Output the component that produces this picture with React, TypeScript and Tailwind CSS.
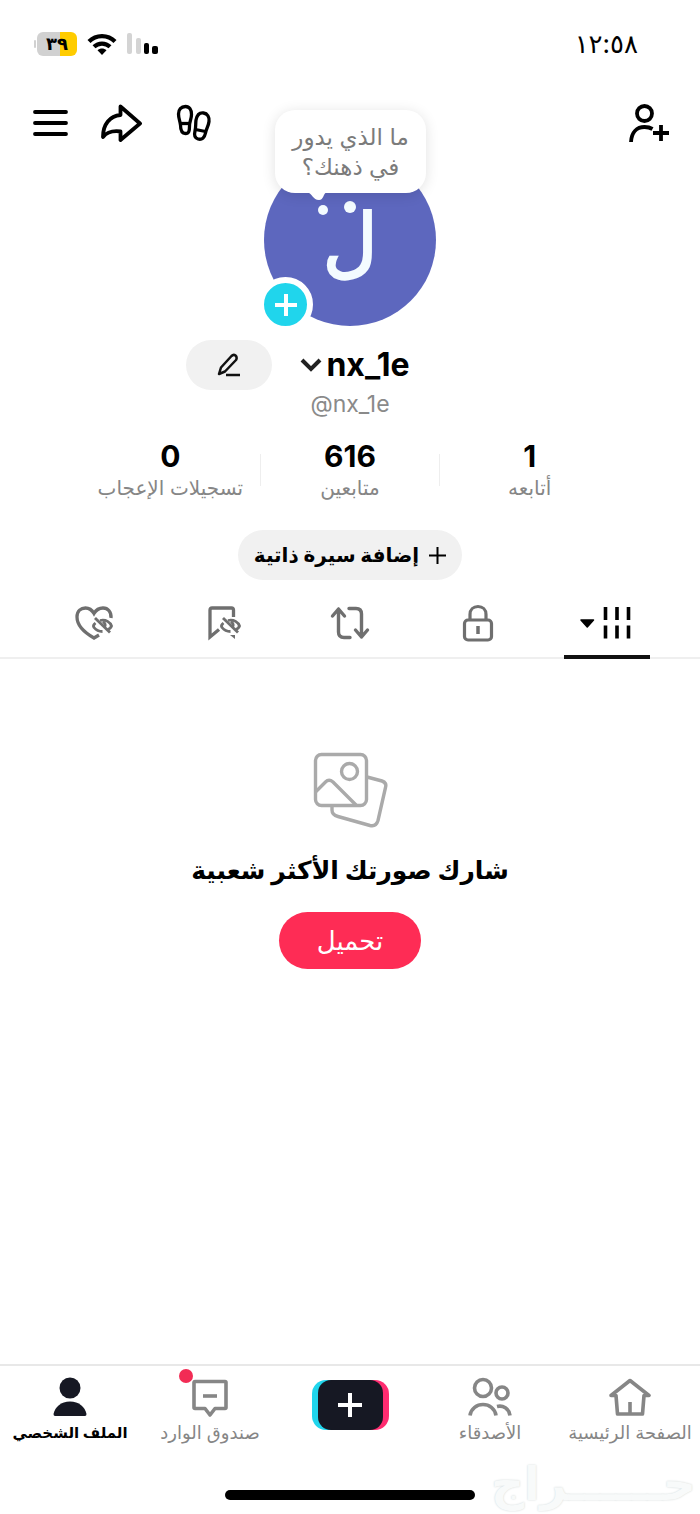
import React, { useState } from 'react';

const MenuIcon = () => (
  <svg width="36" height="28" viewBox="0 0 36 28" fill="none" stroke="#000" strokeWidth="3.800" strokeLinecap="round">
    <path d="M3 3H34M3 14H34M3 25H34" />
  </svg>
);

const ShareIcon = () => (
  <svg width="42" height="38" viewBox="0 0 42 38" fill="none" stroke="#000" strokeWidth="3.800" strokeLinejoin="round">
    <path d="M19.500 2.500L39 19.500L19.500 36V27.500C12 26.500 6 28 2 33C2 20 9 12 19.500 11Z" />
  </svg>
);

const FootprintsIcon = () => (
  <svg width="36" height="38" viewBox="0 0 36 38" fill="none" stroke="#000" strokeWidth="3.300">
    <path d="M9.500 2.500C13.500 2.500 15.500 6 15.500 10.500C15.500 15 13.500 17 13.500 22C13.500 27 13 29.500 9.500 29.500C5.500 29.500 4.500 26 4.500 21C4 17 2.500 14 2.500 10C2.500 5.500 5 2.500 9.500 2.500Z" />
    <path d="M4.500 19.500H13.500" />
    <path d="M27.500 9C31.500 9.500 33.500 13 33 17.500C32.500 22 30.500 24 29.500 29C28.500 34 26 36 22 35C18.500 34 18 31 19 27C20 23 19.500 20 20 16C21 11 23.500 8.500 27.500 9Z" />
    <path d="M19.500 25.500L29.500 27.500" />
  </svg>
);

const AddFriendIcon = () => (
  <svg width="42" height="39" viewBox="0 0 42 39" fill="none" stroke="#000" strokeWidth="3.800">
    <circle cx="16.500" cy="9.500" r="7.500" />
    <path d="M3 38C3.500 28 9 23 16.500 23C19.500 23 22 23.500 24.500 25" />
    <path d="M33 21V37M25 29H41" />
  </svg>
);

const WifiIcon = () => (
  <svg width="30" height="23" viewBox="0 0 30 23" fill="none" stroke="#000" strokeWidth="4.200">
    <path d="M2 8.500C9 1.300 21 1.300 28 8.500" />
    <path d="M7 13.800C11.500 9.500 18.500 9.500 23 13.800" />
    <path d="M15 22L10.500 17.300C13 15 17 15 19.500 17.300Z" fill="#000" stroke="none" />
  </svg>
);

const SignalIcon = () => (
  <svg width="32" height="22" viewBox="0 0 32 22">
    <rect x="0" y="0" width="5" height="21" rx="2" fill="#d4d4d4" />
    <rect x="9" y="5" width="5" height="16" rx="2" fill="#d4d4d4" />
    <rect x="17" y="10" width="5" height="11" rx="2" />
    <rect x="25" y="13" width="6" height="8" rx="2" />
  </svg>
);

const HiddenEye = () => (
  <g strokeWidth="2.800">
    <path d="M3.500 6C1.500 7.500 1 9 2 10.500C4 13 7 14.500 10.500 14.500" />
    <path d="M8 3.500C14 2 18.500 5.500 19.500 9C19 10.500 17.500 12 15.500 12.500" />
    <path d="M11 4.500C13.500 6.500 13.500 8.500 12.500 10" />
    <path d="M3 1L18 15.500" />
  </g>
);

const LikedIcon = () => (
  <svg width="44" height="36" viewBox="-4 0 44 36" fill="none" stroke="#6f6f6f" strokeWidth="3.300">
    <path d="M24 30L19 33C12 29 2 22 2 12C2 6 6 3 10.500 3C14.500 3 17 5 19 8.500C21 5 24 3 28 3C33 3 36.500 7 36 13" />
    <g transform="translate(17 12)"><HiddenEye /></g>
  </svg>
);

const SavedIcon = () => (
  <svg width="44" height="36" viewBox="-8 0 44 36" fill="none" stroke="#6f6f6f" strokeWidth="3.300">
    <path d="M25.500 12V5Q25.500 3 23.500 3H4Q2 3 2 5V32L11 24.500" />
    <path d="M22 30H27V34Z" fill="#6f6f6f" stroke="none" />
    <g transform="translate(12 12)"><HiddenEye /></g>
  </svg>
);

const RepostIcon = () => (
  <svg width="40" height="36" viewBox="0 0 40 36" fill="none" stroke="#6f6f6f" strokeWidth="3.400" strokeLinecap="round" strokeLinejoin="round">
    <path d="M2.500 11L8.500 4L14.500 11M8.500 4V27Q8.500 32.500 14 32.500H20" />
    <path d="M19 3.500H26Q31.500 3.500 31.500 9V32M25.500 25L31.500 32L37.500 25" />
  </svg>
);

const LockIcon = () => (
  <svg width="32" height="38" viewBox="0 0 32 38" fill="none" stroke="#6f6f6f" strokeWidth="3.200">
    <rect x="2.500" y="16" width="27" height="20" rx="3.500" />
    <path d="M8 16V10.500C8 5.500 11.500 2.500 16 2.500C20.500 2.500 24 5.500 24 10.500V16" />
    <path d="M16 22V30" strokeWidth="3.500" />
  </svg>
);

const PostsIcon = () => (
  <svg width="54" height="36" viewBox="0 0 54 36" fill="none" stroke="#000" strokeWidth="3.600">
    <path d="M1 15H13.500L7.250 22Z" fill="#000" strokeWidth="1.500" strokeLinejoin="round" />
    <path d="M25.500 2V15M37 2V15M48.500 2V15M25.500 20.500V33.500M37 20.500V33.500M48.500 20.500V33.500" />
  </svg>
);

const PhotosIcon = () => (
  <svg width="76" height="77" viewBox="-1 0 76 77" fill="none" stroke="#aaa" strokeWidth="3.400">
    <rect x="2.500" y="2.500" width="51" height="51" rx="6" />
    <circle cx="36.500" cy="19.500" r="8" />
    <path d="M2.500 40L12.500 30Q16 26.500 20 30L43 53" />
    <path d="M54 25L69 29Q74 30.500 72.500 35.500L65 68.500Q63 75 57 73.500L25 64.500Q19 63 19 58V54" />
  </svg>
);

const HomeIcon = () => (
  <svg width="42" height="40" viewBox="0 0 42 40" fill="none" stroke="#868686" strokeWidth="3.600" strokeLinejoin="round">
    <path d="M7 18.500H2L21 3.500L40 18.500H35L33.500 37H8.500Z" />
    <path d="M21 25V37" />
  </svg>
);

const FriendsIcon = () => (
  <svg width="44" height="40" viewBox="0 0 44 40" fill="none" stroke="#868686" strokeWidth="3.600">
    <circle cx="15" cy="11" r="8.500" />
    <circle cx="34" cy="16" r="6" />
    <path d="M2 38.500C3 31.500 9 27.500 15 27.500C21 27.500 27 31.500 28 38.500" />
    <path d="M29 29.500C35 28 41 31.500 42 38.500" />
  </svg>
);

const InboxIcon = () => (
  <svg width="38" height="40" viewBox="0 0 38 40" fill="none" stroke="#868686" strokeWidth="3.600" strokeLinejoin="round">
    <path d="M4 4.500H34Q35 4.500 35 5.500V30.500Q35 31.500 34 31.500H24L19 38L14 31.500H4Q3 31.500 3 30.500V5.500Q3 4.500 4 4.500Z" />
    <path d="M12 19H26" />
  </svg>
);

const ProfileIcon = () => (
  <svg width="34" height="40" viewBox="0 0 34 40" fill="#161823">
    <circle cx="17" cy="11" r="10.500" />
    <path d="M0.500 37C2 30 8 24.500 17 24.500C26 24.500 32 30 33.500 37Q33.500 39 32 39H2Q0.500 39 0.500 37Z" />
  </svg>
);

const stats = [
  { value: '1', label: 'أتابعه' },
  { value: '616', label: 'متابعين' },
  { value: '0', label: 'تسجيلات الإعجاب' },
];

const tabs = [
  { id: 'posts', label: 'المنشورات', Icon: PostsIcon },
  { id: 'private', label: 'خاص', Icon: LockIcon },
  { id: 'reposts', label: 'إعادة النشر', Icon: RepostIcon },
  { id: 'saved', label: 'المحفوظات', Icon: SavedIcon },
  { id: 'liked', label: 'الإعجابات', Icon: LikedIcon },
];

interface NavItemProps {
  label: string;
  active?: boolean;
  badge?: boolean;
  children: React.ReactNode;
}

const NavItem: React.FC<NavItemProps> = ({ label, active, badge, children }) => (
  <a
    href="#"
    className={`flex flex-1 basis-0 flex-col items-center gap-1 whitespace-nowrap ${
      active ? 'text-[15px] leading-6 font-bold text-black' : 'text-lg leading-6 text-[#868686]'
    }`}
  >
    <span className="relative">
      {children}
      {badge && <span className="absolute -top-2 -left-3 size-3.5 rounded-full bg-[#f22c55]" />}
    </span>
    {label}
  </a>
);

export default function App() {
  const [activeTab, setActiveTab] = useState('posts');

  return (
    <div
      dir="rtl"
      className="flex min-h-screen flex-col bg-white font-['Inter','DejaVu_Sans',sans-serif] text-black"
    >
      <div className="flex h-22 items-center justify-between ps-[62px] pe-[34px]">
        <span className="text-[26px] leading-8">١٢:٥٨</span>
        <div className="flex items-center gap-2.5">
          <SignalIcon />
          <WifiIcon />
          <div className="flex items-center gap-px">
            <span className="flex h-6 w-10 items-center justify-center rounded-md bg-linear-to-l from-[#fc0] from-43% to-[#d1d1d1] to-43% text-lg leading-6 font-bold">
              ٣٩
            </span>
            <span className="h-2 w-0.5 rounded-full bg-[#d1d1d1]" />
          </div>
        </div>
      </div>

      <header className="flex h-[66px] items-center justify-between ps-[30px] pe-8 pt-1">
        <button aria-label="إضافة أصدقاء"><AddFriendIcon /></button>
        <div className="flex items-center gap-[33px]">
          <button aria-label="الزوار"><FootprintsIcon /></button>
          <button aria-label="مشاركة"><ShareIcon /></button>
          <button aria-label="القائمة"><MenuIcon /></button>
        </div>
      </header>

      <main className="flex flex-1 flex-col items-center">
        <div className="relative size-43 rounded-full bg-[#5d67be]">
          <span className="flex h-full items-center justify-center text-[76px] leading-none text-[#f3fbff] [-webkit-text-stroke:2px_#f3fbff]">
            ل
          </span>
          <span className="absolute top-[47px] left-20 size-3 rounded-full bg-[#f3fbff]" />
          <span className="absolute top-[51px] left-[54px] size-2.5 rounded-full bg-[#f3fbff]" />
          <button className="absolute -top-11 left-[11px] flex h-[83px] w-[151px] items-center justify-center rounded-[20px] bg-white text-[23px] leading-[30px] whitespace-nowrap text-[#7b7b7b] shadow-[0_2px_14px_rgba(0,0,0,0.12)]">
            <span>
              ما الذي يدور
              <br />
              في ذهنك؟
            </span>
            <svg className="absolute -bottom-2 left-8" width="20" height="9" viewBox="0 0 20 9" fill="#fff">
              <path d="M0 0C5 1 6 8 12 8C17 8 16 1 20 0Z" />
            </svg>
          </button>
          <button
            aria-label="إضافة قصة"
            className="absolute -bottom-1.5 -left-1.5 flex size-[55px] items-center justify-center rounded-full border-[6px] border-white bg-[#20d5ec]"
          >
            <svg width="24" height="24" viewBox="0 0 24 24" stroke="#fff" strokeWidth="4">
              <path d="M12 1V23M1 12H23" />
            </svg>
          </button>
        </div>

        <div className="mt-3.5 grid w-full grid-cols-[1fr_auto_1fr] items-center gap-[18px]">
          <span />
          <button className="flex items-center gap-1 pe-2.5">
            <h1 className="text-[32px] leading-9 font-bold">nx_1e</h1>
            <svg width="22" height="16" viewBox="0 0 22 16" fill="none" stroke="#222" strokeWidth="4">
              <path d="M2 3L11 12L20 3" />
            </svg>
          </button>
          <button
            aria-label="تعديل الملف الشخصي"
            className="flex h-[50px] w-[86px] items-center justify-center rounded-full bg-[#f1f1f1]"
          >
            <svg width="24" height="24" viewBox="0 0 24 24" fill="none" stroke="#111" strokeWidth="2.500" strokeLinejoin="round">
              <path d="M2 21L4 14.500L14.500 3Q16.500 1 18.500 2.500Q20.500 4.500 19 7L8 18.500Z" />
              <path d="M9 22H23" />
            </svg>
          </button>
        </div>
        <p dir="ltr" className="text-[23px] leading-7 text-[#8a8a8a]">@nx_1e</p>

        <dl className="mt-5 flex w-full max-w-[538px] items-center justify-center">
          {stats.map((stat, i) => (
            <React.Fragment key={stat.label}>
              {i > 0 && <span className="h-8 w-px bg-[#eee]" />}
              <div className="flex flex-1 basis-0 flex-col-reverse items-center whitespace-nowrap">
                <dt className="text-xl leading-7 text-[#868686]">{stat.label}</dt>
                <dd className="text-[30px] leading-9 font-bold">{stat.value}</dd>
              </div>
            </React.Fragment>
          ))}
        </dl>

        <button className="mt-7 flex h-[50px] items-center gap-2.5 rounded-full bg-[#f1f1f1] px-4 text-xl font-bold">
          <svg width="17" height="17" viewBox="0 0 17 17" stroke="#000" strokeWidth="2">
            <path d="M8.500 0V17M0 8.500H17" />
          </svg>
          إضافة سيرة ذاتية
        </button>

        <div role="tablist" className="mt-2 flex h-[71px] w-full border-b-2 border-[#efefef] px-[29px]">
          {tabs.map(({ id, label, Icon }) => (
            <button
              key={id}
              role="tab"
              aria-label={label}
              aria-selected={activeTab === id}
              onClick={() => setActiveTab(id)}
              className="relative flex flex-1 items-center justify-center"
            >
              <Icon />
              {activeTab === id && <span className="absolute inset-x-[21px] -bottom-0.5 h-1 bg-[#111]" />}
            </button>
          ))}
        </div>

        <section className="flex flex-col items-center pt-[93px]">
          <PhotosIcon />
          <h2 className="mt-[23px] text-[25px] leading-9 font-bold">شارك صورتك الأكثر شعبية</h2>
          <button className="mt-6 h-[57px] w-[142px] rounded-full bg-[#fe2c55] text-[26px] text-white">
            تحميل
          </button>
        </section>
      </main>

      <footer className="border-t-2 border-[#e8e8e8]">
        <nav className="flex items-start pt-[11px]">
          <NavItem label="الصفحة الرئيسية"><HomeIcon /></NavItem>
          <NavItem label="الأصدقاء"><FriendsIcon /></NavItem>
          <div className="flex flex-1 basis-0 justify-center pt-[3px]">
            <button
              aria-label="إنشاء"
              className="flex rounded-[14px] bg-linear-to-r from-[#20d5ec] from-50% to-[#fe2c70] to-50% px-1.5"
            >
              <span className="flex h-[50px] w-[65px] items-center justify-center rounded-[13px] bg-[#161823]">
                <svg width="24" height="24" viewBox="0 0 24 24" stroke="#fff" strokeWidth="4">
                  <path d="M12 0V24M0 12H24" />
                </svg>
              </span>
            </button>
          </div>
          <NavItem label="صندوق الوارد" badge><InboxIcon /></NavItem>
          <NavItem label="الملف الشخصي" active><ProfileIcon /></NavItem>
        </nav>
        <div className="relative flex h-[69px] items-end justify-center pb-3.5">
          <span className="h-2.5 w-[250px] rounded-full bg-black" />
          <span className="absolute right-1 bottom-2 text-[46px] leading-none font-bold text-[#f8fafa] [text-shadow:0_0_2px_#ccd4d4]">
            حــــــراج
          </span>
        </div>
      </footer>
    </div>
  );
}
